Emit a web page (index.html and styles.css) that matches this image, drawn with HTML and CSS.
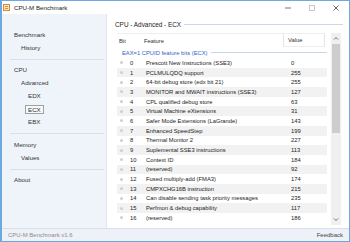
FILE: index.html
```html
<!DOCTYPE html>
<html lang="en">
<head>
    <meta charset="UTF-8">
    <title>CPU-M Benchmark</title>
    <link rel="stylesheet" href="styles.css">
</head>
<body>

<div class="window">
    <div class="titlebar">
        <svg class="app-icon" width="7" height="7" viewBox="0 0 7 7">
            <rect x="0.5" y="0.5" width="6" height="6" fill="#fbe7c6" stroke="#d98a2b"/>
            <path d="M2 2.5h3M2 4.5h3" stroke="#c9782a" stroke-width="0.8"/>
        </svg>
        <span class="title">CPU-M Benchmark</span>
        <div class="caption">
            <svg class="cap-btn" width="24" height="13" viewBox="0 0 24 13"><path d="M9 7h6" stroke="#555" stroke-width="0.8"/></svg>
            <svg class="cap-btn" width="24" height="13" viewBox="0 0 24 13"><rect x="9.5" y="4.5" width="5" height="5" fill="none" stroke="#bbb" stroke-width="0.8"/></svg>
            <svg class="cap-btn" width="24" height="13" viewBox="0 0 24 13"><path d="M9.5 4.5l5 5M14.5 4.5l-5 5" stroke="#444" stroke-width="0.8"/></svg>
        </div>
    </div>

    <div class="content">
        <!-- navigation -->
        <nav class="sidebar">
            <div class="nav-group first">
                <div class="nav-item">Benchmark</div>
                <div class="nav-item sub">History</div>
            </div>
            <div class="nav-sep"></div>
            <div class="nav-group">
                <div class="nav-item">CPU</div>
                <div class="nav-item sub">Advanced</div>
                <div class="nav-item sub2">EDX</div>
                <div class="nav-item sub2"><span class="selected">ECX</span></div>
                <div class="nav-item sub2">EBX</div>
            </div>
            <div class="nav-sep"></div>
            <div class="nav-group">
                <div class="nav-item">Memory</div>
                <div class="nav-item sub">Values</div>
            </div>
            <div class="nav-sep"></div>
            <div class="nav-group">
                <div class="nav-item">About</div>
            </div>
        </nav>

        <main class="main">
            <div class="heading">
                <span>CPU - Advanced - ECX</span>
                <div class="heading-line"></div>
            </div>

            <div class="list">
                <div class="list-body">
                    <div class="list-head">
                        <div class="col-bit">Bit</div>
                        <div class="col-feature">Feature</div>
                        <div class="col-value">Value</div>
                    </div>
                    <div class="group-title">
                        <span>EAX=1 CPUID feature bits (ECX)</span>
                        <div class="group-line"></div>
                    </div>
                    <div class="rows">
                        <div class="row"><i class="dot"></i><span class="num">0</span><span class="feat">Prescott New Instructions (SSE3)</span><span class="val">0</span></div>
                        <div class="row"><i class="dot"></i><span class="num">1</span><span class="feat">PCLMULQDQ support</span><span class="val">255</span></div>
                        <div class="row"><i class="dot"></i><span class="num">2</span><span class="feat">64-bit debug store (edx bit 21)</span><span class="val">255</span></div>
                        <div class="row"><i class="dot"></i><span class="num">3</span><span class="feat">MONITOR and MWAIT instructions (SSE3)</span><span class="val">127</span></div>
                        <div class="row"><i class="dot"></i><span class="num">4</span><span class="feat">CPL qualified debug store</span><span class="val">63</span></div>
                        <div class="row"><i class="dot"></i><span class="num">5</span><span class="feat">Virtual Machine eXtensions</span><span class="val">31</span></div>
                        <div class="row"><i class="dot"></i><span class="num">6</span><span class="feat">Safer Mode Extensions (LaGrande)</span><span class="val">143</span></div>
                        <div class="row"><i class="dot"></i><span class="num">7</span><span class="feat">Enhanced SpeedStep</span><span class="val">199</span></div>
                        <div class="row"><i class="dot"></i><span class="num">8</span><span class="feat">Thermal Monitor 2</span><span class="val">227</span></div>
                        <div class="row"><i class="dot"></i><span class="num">9</span><span class="feat">Suplemental SSE3 instructions</span><span class="val">113</span></div>
                        <div class="row"><i class="dot"></i><span class="num">10</span><span class="feat">Context ID</span><span class="val">184</span></div>
                        <div class="row"><i class="dot"></i><span class="num">11</span><span class="feat">(reserved)</span><span class="val">92</span></div>
                        <div class="row"><i class="dot"></i><span class="num">12</span><span class="feat">Fused multiply-add (FMA3)</span><span class="val">174</span></div>
                        <div class="row"><i class="dot"></i><span class="num">13</span><span class="feat">CMPXCHG16B instruction</span><span class="val">215</span></div>
                        <div class="row"><i class="dot"></i><span class="num">14</span><span class="feat">Can disable sending task priority messages</span><span class="val">235</span></div>
                        <div class="row"><i class="dot"></i><span class="num">15</span><span class="feat">Perfmon &amp; debug capability</span><span class="val">117</span></div>
                        <div class="row"><i class="dot"></i><span class="num">16</span><span class="feat">(reserved)</span><span class="val">186</span></div>
                    </div>
                </div>

                <div class="scrollbar">
                    <svg class="arrow" width="10" height="11" viewBox="0 0 10 11"><path d="M3 6.5l2-2 2 2" fill="none" stroke="#606060" stroke-width="0.9"/></svg>
                    <div class="thumb"></div>
                    <div class="track"></div>
                    <svg class="arrow" width="10" height="11" viewBox="0 0 10 11"><path d="M3 4.5l2 2 2-2" fill="none" stroke="#606060" stroke-width="0.9"/></svg>
                </div>
            </div>
        </main>
    </div>

    <div class="statusbar">
        <span class="version">CPU-M Benchmark v1.6</span>
        <span class="feedback">Feedback</span>
    </div>
</div>

</body>
</html>
```

FILE: styles.css
```css
* {
    box-sizing: border-box;
}

body {
    margin: 0;
    background: #fff;
    font-family: "Liberation Sans", Arial, sans-serif;
    color: #222;
}

.window {
    width: 350px;
    height: 242px;
    border: 1px solid #6ea8e0;
    border-left-width: 2px;
    display: flex;
    flex-direction: column;
    overflow: hidden;
}

/* title bar */
.titlebar {
    height: 13px;
    display: flex;
    align-items: center;
    background: #fff;
    padding-left: 1px;
}

.app-icon {
    display: block;
}

.title {
    margin-left: 4px;
    font-size: 6.2px;
    color: #222;
}

.caption {
    margin-left: auto;
    display: flex;
    margin-right: 1px;
}

.cap-btn {
    display: block;
}

/* main body */
.content {
    flex: 1;
    display: flex;
    min-height: 0;
}

.sidebar {
    width: 105px;
    background: #eff3fa;
    border-right: 1px solid #dfe5ef;
    font-size: 6.2px;
    color: #333;
    padding: 0 2px 0 8px;
}

.nav-group {
    padding: 3.5px 0 5px;
}

.nav-group.first {
    padding-top: 13.5px;
}

.nav-item {
    height: 13px;
    line-height: 13px;
    padding-left: 4px;
}

.nav-item.sub {
    padding-left: 11px;
}

.nav-item.sub2 {
    padding-left: 18px;
}

.selected {
    display: inline-block;
    line-height: 7px;
    padding: 0 2px;
    margin-left: -3px;
    border: 1px solid #a0a0a0;
    background: #f7f9fc;
    vertical-align: middle;
}

.nav-sep {
    height: 1px;
    background: #d9e0eb;
}

.main {
    flex: 1;
    padding: 0 6px 0 10px;
    display: flex;
    flex-direction: column;
}

.heading {
    margin-top: 5px;
    height: 10px;
    display: flex;
    align-items: center;
    margin-left: -2px;
    font-size: 6.4px;
    color: #222;
}

.heading-line {
    flex: 1;
    height: 1px;
    margin-left: 3px;
    background: #ccd8ea;
}

.list {
    margin-top: 4px;
    height: 192px;
    display: flex;
}

.list-body {
    flex: 1;
    font-size: 5.8px;
}

.list-head {
    height: 14px;
    display: flex;
    align-items: center;
    border-top: 1px solid #eeeeee;
    width: 208px;
    color: #333;
}

.col-bit {
    width: 24px;
    padding-left: 2px;
}

.col-feature {
    width: 142px;
    padding-left: 3px;
}

.col-value {
    width: 42px;
    height: 100%;
    line-height: 13px;
    padding-left: 4px;
    border-left: 1px solid #e3e3e3;
    border-right: 1px solid #e3e3e3;
    border-bottom: 1px solid #eeeeee;
}

.group-title {
    height: 11px;
    display: flex;
    align-items: center;
    padding-left: 5px;
    color: #3461c8;
}

.group-line {
    flex: 1;
    height: 1px;
    margin-left: 3px;
    background: #c8d6ec;
}

.row {
    height: 9.7px;
    display: flex;
    align-items: center;
}

.row:nth-child(even) {
    background: #f2f2f2;
}

.dot {
    width: 3px;
    height: 3px;
    margin-left: 3px;
    border-radius: 50%;
    background: #cfcfcf;
}

.num {
    width: 16px;
    margin-left: 7px;
}

.feat {
    width: 145px;
    white-space: nowrap;
}

/* scrollbar */
.scrollbar {
    width: 10px;
    margin-left: 4px;
    margin-right: 2px;
    display: flex;
    flex-direction: column;
    background: #f0f0f0;
}

.arrow {
    display: block;
    flex: none;
}

.thumb {
    height: 89px;
    background: #cdcdcd;
    margin: 0 1px;
}

.track {
    flex: 1;
}

/* status bar */
.statusbar {
    height: 13px;
    display: flex;
    align-items: center;
    justify-content: space-between;
    background: #eef2f8;
    border-top: 1px solid #d8dfea;
    padding: 0 6px;
    font-size: 6px;
}

.version {
    color: #8a8a8a;
}

.feedback {
    color: #444;
}
```
